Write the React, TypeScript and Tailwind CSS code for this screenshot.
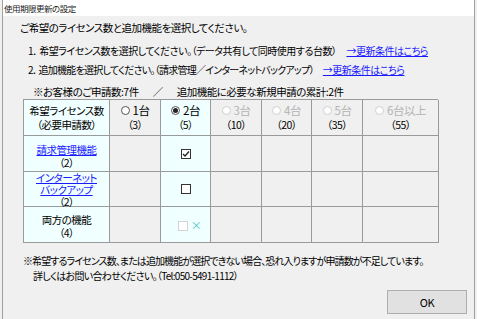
import React from "react";

const font = {
  fontFamily: '"Noto Sans CJK JP", "Noto Sans", sans-serif',
};

function Radio({ checked, disabled }: { checked?: boolean; disabled?: boolean }) {
  return (
    <span
      className={
        "inline-flex items-center justify-center w-[9px] h-[9px] rounded-full border mr-[3px] bg-white " +
        (disabled ? "border-[#cfcfcf]" : "border-[#555]")
      }
    >
      {checked ? <span className="block w-[5px] h-[5px] rounded-full bg-[#222]" /> : null}
    </span>
  );
}

function Check({ checked, disabled }: { checked?: boolean; disabled?: boolean }) {
  return (
    <span
      className={
        "inline-flex items-center justify-center w-[10px] h-[10px] border bg-white " +
        (disabled ? "border-[#d4d4d4]" : "border-[#333]")
      }
    >
      {checked ? (
        <svg width="8" height="8" viewBox="0 0 8 8">
          <path d="M1 4 L3 6 L7 1.5" stroke="#222" strokeWidth="1.3" fill="none" />
        </svg>
      ) : null}
    </span>
  );
}

const cols = [
  { label: "1台", n: "（3）", checked: false, disabled: false },
  { label: "2台", n: "（5）", checked: true, disabled: false },
  { label: "3台", n: "（10）", checked: false, disabled: true },
  { label: "4台", n: "（20）", checked: false, disabled: true },
  { label: "5台", n: "（35）", checked: false, disabled: true },
  { label: "6台以上", n: "（55）", checked: false, disabled: true },
];

export default function App() {
  const cell = "border-r border-b border-[#9a9a9a] flex flex-col items-center justify-center";
  return (
    <div
      className="w-[477px] h-[319px] bg-[#f0f0f0] overflow-hidden text-black whitespace-nowrap tracking-[-0.5px] [font-feature-settings:'palt']"
      style={font}
    >
      <div className="h-full mx-[2px] border-x border-[#a0a0a0] flex flex-col">
        <div className="h-[16px] bg-white text-[8.5px] leading-[16px] pl-px text-[#222]">使用期限更新の設定</div>
        <div className="flex-1 flex flex-col text-[10.5px]">
          <div className="mt-[5px] h-[14px] leading-[14px] pl-[17px]">ご希望のライセンス数と追加機能を選択してください。</div>
          <div className="mt-[9px] h-[14px] leading-[14px] pl-[25px] flex text-[10px]">
            <span>1． 希望ライセンス数を選択してください。（データ共有して同時使用する台数）</span>
            <span className="ml-[10px] text-[#1a1aff] underline">→更新条件はこちら</span>
          </div>
          <div className="mt-[5px] h-[14px] leading-[14px] pl-[25px] flex text-[10px]">
            <span className="tracking-[-0.75px]">2． 追加機能を選択してください。（請求管理／インターネットバックアップ）</span>
            <span className="ml-[9px] text-[#1a1aff] underline">→更新条件はこちら</span>
          </div>
          <div className="mt-[8px] h-[14px] leading-[14px] pl-[30px] text-[10.5px] flex">
            <span>※お客様のご申請数:7件</span>
            <span className="mx-[14px]">／</span>
            <span>追加機能に必要な新規申請の累計:2件</span>
          </div>
          <div className="ml-[20px] w-[415px] grid grid-cols-[86px_51px_50px_51px_50px_51px_76px] grid-rows-[36px_36px_35px_36px] border-l border-t border-[#9a9a9a]">
            <div className={cell + " bg-[#f0ffff] leading-[14px]"}>
              <span>希望ライセンス数</span>
              <span>（必要申請数）</span>
            </div>
            {cols.map((c, i) => (
              <div key={i} className={cell + (i === 1 ? " bg-[#f0ffff]" : "") + " leading-[13px]"}>
                <span className={"flex items-center text-[11.5px] " + (c.disabled ? "text-[#b4b4b4]" : "")}>
                  <Radio checked={c.checked} disabled={c.disabled} />
                  {c.label}
                </span>
                <span className="mt-[1px]">{c.n}</span>
              </div>
            ))}
            {/* row 2 */}
            <div className={cell + " bg-[#f0ffff] leading-[13px] pt-[4px]"}>
              <span className="text-[#1a1aff] underline">請求管理機能</span>
              <span>（2）</span>
            </div>
            {cols.map((c, i) => (
              <div key={i} className={cell + (i === 1 ? " bg-[#f0ffff]" : "")}>
                {i === 1 ? <Check checked /> : null}
              </div>
            ))}
            {/* row 3 */}
            <div className={cell + " bg-[#f0ffff] pt-[1px]"}>
              <span className="text-[#1a1aff] underline leading-[12px]">インターネット</span>
              <span className="text-[#1a1aff] underline leading-[12px]">バックアップ</span>
              <span className="leading-[11px]">（2）</span>
            </div>
            {cols.map((c, i) => (
              <div key={i} className={cell + (i === 1 ? " bg-[#f0ffff]" : "")}>
                {i === 1 ? <Check /> : null}
              </div>
            ))}
            {/* row 4 */}
            <div className={cell + " bg-[#f0ffff] leading-[13px] pt-[3px]"}>
              <span>両方の機能</span>
              <span>（4）</span>
            </div>
            {cols.map((c, i) => (
              <div key={i} className={cell + (i === 1 ? " bg-[#f0ffff]" : "")}>
                {i === 1 ? (
                  <span className="flex items-center ml-[8px] pt-[2px]">
                    <Check disabled />
                    <span className="ml-[3px] text-[#4cc4c4] text-[11px] leading-none">×</span>
                  </span>
                ) : null}
              </div>
            ))}
          </div>
          <div className="mt-[11px] h-[14px] leading-[14px] pl-[20px] text-[10px] tracking-[-0.9px]">
            ※希望するライセンス数、または追加機能が選択できない場合、恐れ入りますが申請数が不足しています。
          </div>
          <div className="mt-[1px] h-[14px] leading-[14px] pl-[30px] text-[10px] tracking-[-0.7px]">
            詳しくはお問い合わせください。（Tel:050-5491-1112）
          </div>
          <div className="mt-[7px] flex justify-end pr-[7px]">
            <button className="w-[80px] h-[24px] bg-[#e1e1e1] border border-[#adadad] text-[11px] leading-none">
              OK
            </button>
          </div>
        </div>
      </div>
    </div>
  );
}
